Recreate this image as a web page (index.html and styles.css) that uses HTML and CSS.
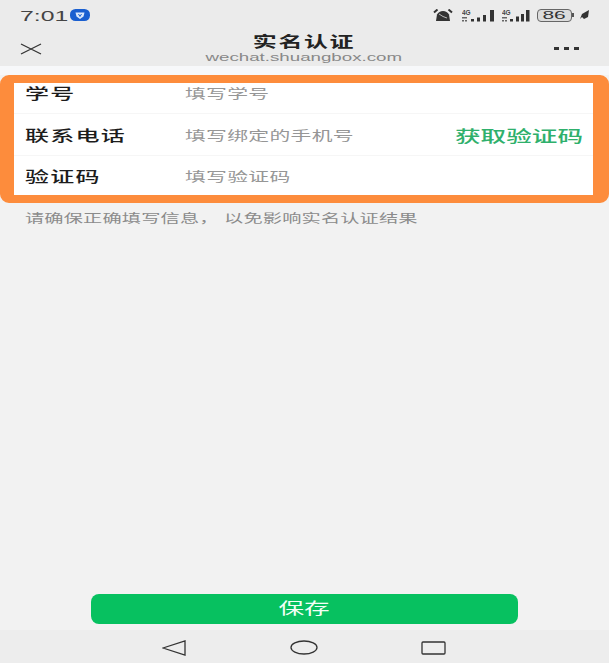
FILE: index.html
```html
<!DOCTYPE html>
<html lang="zh">
<head>
    <meta charset="UTF-8">
    <meta name="viewport" content="width=device-width, initial-scale=1.0">
    <title>实名认证</title>
    <link rel="stylesheet" href="styles.css">
</head>
<body>
    <div class="top-bar">
        <div class="status-bar">
            <div class="status-left">
                <span class="time wide">7:01</span>
                <svg width="20" height="12" viewBox="0 0 20 12">
                    <rect width="20" height="12" rx="5.500" fill="#1a5fd0"/>
                    <path d="M5.500 3.500h9l-1 4-3.500 2.500-3.500-2.500z" fill="#dbe8fb"/>
                    <path d="M8.500 5 10 7.500 11.500 5" fill="none" stroke="#1a5fd0"/>
                </svg>
            </div>
            <div class="status-right">
                <svg class="alarm" width="20" height="12" viewBox="0 0 20 12">
                    <path d="M1 3.500 4.500.5M19 3.500 15.500.5" stroke="#333" stroke-width="2"/>
                    <path d="M3 12 4 5.500Q6 2 10 2t6 3.500L17 12z" fill="#333"/>
                    <path d="M6 5 10 7.500 14 9" stroke="#bbb" fill="none"/>
                </svg>
                <svg class="signal-a" width="33" height="13" viewBox="0 0 33 13">
                    <text x="0" y="6" class="net-label">4G</text>
                    <path d="M0 8h5v1.500H0zM0 11h2v1.500H0zM3 11h2v1.500H3z" fill="#666"/>
                    <path d="M9 10h3v2.500H9zM15 8.500h3v4h-3zM21 6h3v6.500h-3zM28 1h4v11.500h-4z" fill="#333"/>
                </svg>
                <svg class="signal-b" width="28" height="13" viewBox="0 0 28 13">
                    <text x="0" y="6" class="net-label">4G</text>
                    <path d="M0 8h5v1.500H0zM0 11h2v1.500H0zM3 11h2v1.500H3z" fill="#666"/>
                    <path d="M8 10h3v2.500H8zM14 7.500h3v5h-3zM19 5h3v7.500h-3zM24 1h3.500v11.500H24z" fill="#333"/>
                </svg>
                <div class="battery"><span class="battery-num">86</span></div>
                <span class="battery-tip"></span>
                <svg class="arrow" width="11" height="10" viewBox="0 0 11 10">
                    <path d="M1 9 3 4l7-4-1 7-4 2-2-2z" fill="#333"/>
                </svg>
            </div>
        </div>
        <div class="nav-bar">
            <svg class="close-icon" width="22" height="12" viewBox="0 0 22 12">
                <path d="M1 1 21 11M21 1 1 11" stroke="#333" stroke-width="1.300"/>
            </svg>
            <div class="nav-title">
                <div class="title wide-center">实名认证</div>
                <div class="subtitle wide-center">wechat.shuangbox.com</div>
            </div>
            <div class="more"><i></i><i></i><i></i></div>
        </div>
    </div>

    <div class="main">
        <div class="form-box">
            <div class="form-row first-row">
                <span class="label"><span class="wide">学号</span></span>
                <span class="placeholder wide">填写学号</span>
            </div>
            <div class="form-row">
                <span class="label"><span class="wide">联系电话</span></span>
                <span class="placeholder wide">填写绑定的手机号</span>
                <span class="get-code wide-right">获取验证码</span>
            </div>
            <div class="form-row last-row">
                <span class="label"><span class="wide">验证码</span></span>
                <span class="placeholder wide">填写验证码</span>
            </div>
        </div>
        <p class="hint"><span class="wide">请确保正确填写信息， 以免影响实名认证结果</span></p>
        <button class="save-btn" type="button"><span class="wide-center">保存</span></button>
    </div>

    <div class="bottom-nav">
        <svg width="24" height="16" viewBox="0 0 24 16">
            <path d="M23 1v14L1 8z" fill="none" stroke="#333" stroke-width="1.300"/>
        </svg>
        <svg width="28" height="15" viewBox="0 0 28 15">
            <ellipse cx="14" cy="7.500" rx="13" ry="6.500" fill="none" stroke="#333" stroke-width="1.300"/>
        </svg>
        <svg width="25" height="14" viewBox="0 0 25 14">
            <rect x="1" y="1" width="23" height="12" rx="1" fill="none" stroke="#333" stroke-width="1.300"/>
        </svg>
    </div>
</body>
</html>
```
FILE: styles.css
```css
body {
    font-family: "Liberation Sans", "Noto Sans CJK SC", sans-serif;
    display: flex;
    flex-direction: column;
    height: 663px;
    margin: 0;
    background-color: #f2f2f2;
    color: #222;
    overflow: hidden;
}
/* the screenshot is stretched sideways, so the text is too */
.wide, .wide-center, .wide-right {
    display: inline-block;
    white-space: nowrap;
    transform: scaleX(1.6);
}
.wide { transform-origin: left center; }
.wide-center { transform-origin: center; }
.wide-right { transform-origin: right center; }

.top-bar {
    height: 66px;
    background-color: #ebebeb;
    border-bottom: 9px solid #f7f8fa;
}
.status-bar {
    display: flex;
    justify-content: space-between;
    align-items: center;
    height: 30px;
    padding: 0 19px 0 20px;
}
.status-left {
    display: flex;
    align-items: center;
}
.time {
    width: 50px;
    font-size: 15px;
    color: #444;
    transform: scaleX(1.65);
}
.status-right {
    display: flex;
    align-items: center;
}
.net-label {
    font-size: 6.500px;
    font-weight: bold;
    fill: #444;
}
.signal-a { margin-left: 9px; }
.signal-b { margin-left: 7px; }
.battery {
    width: 33px;
    height: 11px;
    margin-left: 7px;
    border: 1px solid #666;
    border-radius: 4px;
    background-color: #dcdcdc;
    font-size: 11px;
    line-height: 11px;
    text-align: center;
    color: #333;
}
.battery-num {
    display: inline-block;
    transform: scaleX(1.9);
}
.battery-tip {
    width: 2px;
    height: 4px;
    background-color: #555;
}
.arrow { margin-left: 5px; }
.nav-bar {
    display: flex;
    justify-content: space-between;
    align-items: center;
    height: 36px;
    padding: 0 29px 0 20px;
}
.close-icon {
    margin-top: 1px;
}
.nav-title {
    text-align: center;
    line-height: 1;
    margin-left: 12px;
    padding-top: 1px;
}
.title {
    font-size: 15px;
    font-weight: bold;
    letter-spacing: 1px;
    line-height: 17px;
}
.subtitle {
    display: block;
    font-size: 11px;
    color: #888;
    line-height: 14px;
    transform: scaleX(1.7);
}
.more {
    display: flex;
    gap: 5px;
    margin-top: 1px;
    margin-right: 1px;
}
.more i {
    width: 5px;
    height: 3px;
    background-color: #333;
}

.main {
    flex: 1;
    display: flex;
    flex-direction: column;
}
.form-box {
    border: solid #fd8c3c;
    border-width: 8px 16px 8px 14px;
    border-radius: 9px;
    background-color: #fff;
}
.form-row {
    display: flex;
    align-items: center;
    height: 41px;
    padding: 0 10px 0 11px;
    border-bottom: 1px solid #f6f6f6;
}
.first-row {
    height: 31px;
    padding-bottom: 11px;
    box-sizing: border-box;
}
.last-row {
    height: 39px;
    border-bottom: none;
}
.label {
    width: 160px;
    flex: none;
    font-size: 15px;
    font-weight: 500;
    letter-spacing: 0.8px;
    color: #1c1c1c;
}
.placeholder {
    font-size: 13px;
    letter-spacing: 0.2px;
    color: #969696;
}
.get-code {
    margin-left: auto;
    font-size: 16px;
    font-weight: 500;
    color: #2fb06c;
}
.hint {
    margin: 7px 0 0 25px;
    font-size: 12px;
    letter-spacing: 0.1px;
    line-height: 18px;
    color: #8b8b8b;
}
.save-btn {
    display: block;
    align-self: center;
    width: 427px;
    height: 30px;
    margin-top: auto;
    margin-bottom: 6px;
    padding: 0 0 4px;
    border: none;
    border-radius: 8px;
    background-color: #07c160;
    color: #f2fff6;
    font-family: inherit;
    font-size: 16px;
}
.bottom-nav {
    display: flex;
    justify-content: space-between;
    align-items: center;
    height: 33px;
    padding: 2px 163px 0 162px;
    box-sizing: border-box;
    background-color: #ededed;
}
```
